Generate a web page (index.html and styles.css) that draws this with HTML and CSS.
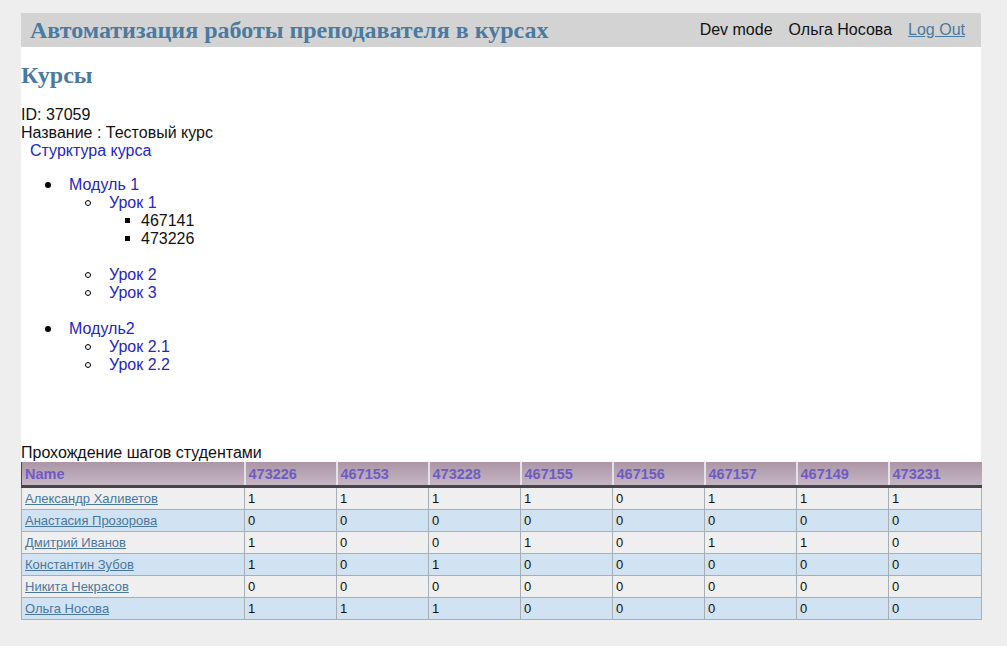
FILE: index.html
```html
<!DOCTYPE html>
<html lang="ru">
<head>
<meta charset="utf-8">
<title>Курсы</title>
<link rel="stylesheet" href="styles.css">
</head>
<body>
<div class="page">
  <header class="topbar">
    <div class="brand">Автоматизация работы преподавателя в курсах</div>
    <nav class="usernav">
      <span>Dev mode</span>
      <span>Ольга Носова</span>
      <a href="#" class="logout">Log Out</a>
    </nav>
  </header>
  <main class="content">
    <h2 class="title">Курсы</h2>
    <div class="info">ID: 37059</div>
    <div class="info">Название : Тестовый курс</div>
    <div class="structure">
      <a href="#" class="slink">Стурктура курса</a>
      <ul class="lvl1">
        <li><a href="#" class="slink">Модуль 1</a>
          <ul class="lvl2">
            <li><a href="#" class="slink">Урок 1</a>
              <ul class="lvl3">
                <li>467141</li>
                <li>473226</li>
              </ul>
            </li>
            <li><a href="#" class="slink">Урок 2</a></li>
            <li><a href="#" class="slink">Урок 3</a></li>
          </ul>
        </li>
        <li><a href="#" class="slink">Модуль2</a>
          <ul class="lvl2 last">
            <li><a href="#" class="slink">Урок 2.1</a></li>
            <li><a href="#" class="slink">Урок 2.2</a></li>
          </ul>
        </li>
      </ul>
    </div>
    <div class="caption">Прохождение шагов студентами</div>
    <table class="steps">
      <colgroup>
        <col class="c-name">
        <col class="c-step"><col class="c-step"><col class="c-step"><col class="c-step">
        <col class="c-step"><col class="c-step"><col class="c-step"><col class="c-last">
      </colgroup>
      <thead>
        <tr>
          <th class="name-col">Name</th>
          <th>473226</th><th>467153</th><th>473228</th><th>467155</th><th>467156</th><th>467157</th><th>467149</th><th>473231</th>
        </tr>
      </thead>
      <tbody>
        <tr><td><a href="#">Александр Халиветов</a></td><td>1</td><td>1</td><td>1</td><td>1</td><td>0</td><td>1</td><td>1</td><td>1</td></tr>
        <tr><td><a href="#">Анастасия Прозорова</a></td><td>0</td><td>0</td><td>0</td><td>0</td><td>0</td><td>0</td><td>0</td><td>0</td></tr>
        <tr><td><a href="#">Дмитрий Иванов</a></td><td>1</td><td>0</td><td>0</td><td>1</td><td>0</td><td>1</td><td>1</td><td>0</td></tr>
        <tr><td><a href="#">Константин Зубов</a></td><td>1</td><td>0</td><td>1</td><td>0</td><td>0</td><td>0</td><td>0</td><td>0</td></tr>
        <tr><td><a href="#">Никита Некрасов</a></td><td>0</td><td>0</td><td>0</td><td>0</td><td>0</td><td>0</td><td>0</td><td>0</td></tr>
        <tr><td><a href="#">Ольга Носова</a></td><td>1</td><td>1</td><td>1</td><td>0</td><td>0</td><td>0</td><td>0</td><td>0</td></tr>
      </tbody>
    </table>
  </main>
</div>
</body>
</html>
```

FILE: styles.css
```css
html, body {
  margin: 0;
  padding: 0;
  background: #eeeeee;
}

body {
  font-family: "Liberation Sans", Arial, sans-serif;
  font-size: 16px;
  color: #111;
}

.page {
  width: 960px;
  margin: 13px 0 0 21px;
  background: #ffffff;
}

.topbar {
  height: 34px;
  background: #d3d3d3;
  display: flex;
  align-items: center;
  justify-content: space-between;
  padding: 0 16px 0 9px;
}

.brand {
  font-family: "Liberation Serif", "Times New Roman", serif;
  font-weight: bold;
  font-size: 24px;
  color: #4a7aa0;
  padding-top: 1px;
}

.usernav {
  display: flex;
  gap: 16px;
  font-size: 16px;
  color: #111;
}

.logout {
  color: #4a7aa0;
  text-decoration: underline;
}

.title {
  font-family: "Liberation Serif", "Times New Roman", serif;
  font-weight: bold;
  font-size: 24px;
  line-height: 27px;
  color: #4a7aa0;
  margin: 15px 0 17px;
}

.info {
  line-height: 18px;
}

.structure {
  padding-left: 9px;
  line-height: 18px;
}

.slink {
  color: #2626c0;
  text-decoration: none;
}

.structure ul {
  list-style: none;
}

.lvl1 {
  margin: 16px 0 16px;
  padding-left: 39px;
}

.lvl2 {
  margin: 0 0 18px;
  padding-left: 40px;
}

.lvl2.last {
  margin-bottom: 0;
}

.lvl3 {
  margin: 0 0 18px;
  padding-left: 32px;
}

.lvl1 > li::before,
.lvl2 > li::before,
.lvl3 > li::before {
  content: "";
  display: inline-block;
  vertical-align: middle;
  box-sizing: border-box;
}

.lvl1 > li::before {
  width: 6px;
  height: 6px;
  border-radius: 50%;
  background: #000;
  margin: -2px 18px 0 -24px;
}

.lvl2 > li::before {
  width: 6px;
  height: 6px;
  border-radius: 50%;
  border: 1px solid #000;
  margin: -2px 18px 0 -24px;
}

.lvl3 > li::before {
  width: 5px;
  height: 5px;
  background: #000;
  margin: -2px 11px 0 -16px;
}

.caption {
  margin-top: 70px;
  line-height: 18px;
}

.steps {
  width: 960px;
  border-collapse: collapse;
  table-layout: fixed;
  font-size: 13px;
}

.c-name {
  width: 223px;
}

.c-step {
  width: 92px;
}

.c-last {
  width: 93px;
}

.steps th {
  height: 23px;
  padding: 0 3px;
  text-align: left;
  font-size: 14.5px;
  font-weight: bold;
  color: #6e5cc4;
  background: linear-gradient(to bottom, #ab95a6, #c6b6c3);
  border-left: 2px solid #e6e0ea;
  border-bottom: 3px solid #46434a;
}

.steps th.name-col {
  border-left: 1px solid #4a474e;
}

.steps td {
  height: 21px;
  padding: 0 3px;
  border: 1px solid #a6aeb6;
  color: #111;
}

.steps tbody tr:nth-child(odd) td {
  background: #efefef;
}

.steps tbody tr:nth-child(even) td {
  background: #d1e3f3;
}

.steps td a {
  color: #4a77a0;
  text-decoration: underline;
}
```
